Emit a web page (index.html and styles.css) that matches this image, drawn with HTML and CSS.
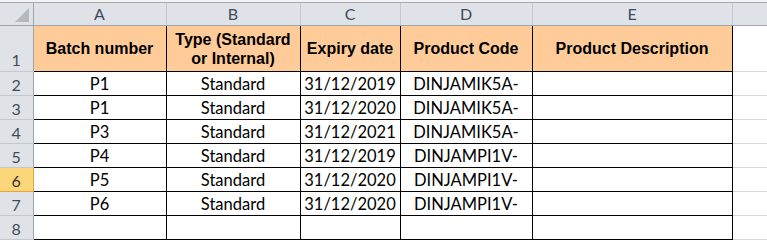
FILE: index.html
```html
<!DOCTYPE html>
<html>
<head>
<meta charset="utf-8">
<link rel="stylesheet" href="styles.css">
</head>
<body>
<div class="topbar"></div>
<table class="sheet">
  <colgroup>
    <col class="w-rh"><col class="w-a"><col class="w-b"><col class="w-c"><col class="w-d"><col class="w-e"><col class="w-f">
  </colgroup>
  <tr class="colhead">
    <th class="corner"><span class="tri"></span></th>
    <th>A</th><th>B</th><th>C</th><th>D</th><th>E</th><th class="last"></th>
  </tr>
  <tr class="r1">
    <th class="rh">1</th>
    <td class="hd">Batch number</td>
    <td class="hd">Type (Standard<br>or Internal)</td>
    <td class="hd">Expiry date</td>
    <td class="hd">Product Code</td>
    <td class="hd edge">Product Description</td>
    <td class="out top"></td>
  </tr>
  <tr class="row"><th class="rh">2</th><td>P1</td><td>Standard</td><td>31/12/2019</td><td>DINJAMIK5A-</td><td class="edge"></td><td class="out"></td></tr>
  <tr class="row"><th class="rh">3</th><td>P1</td><td>Standard</td><td>31/12/2020</td><td>DINJAMIK5A-</td><td class="edge"></td><td class="out"></td></tr>
  <tr class="row"><th class="rh">4</th><td>P3</td><td>Standard</td><td>31/12/2021</td><td>DINJAMIK5A-</td><td class="edge"></td><td class="out"></td></tr>
  <tr class="row"><th class="rh">5</th><td>P4</td><td>Standard</td><td>31/12/2019</td><td>DINJAMPI1V-</td><td class="edge"></td><td class="out"></td></tr>
  <tr class="row"><th class="rh sel">6</th><td>P5</td><td>Standard</td><td>31/12/2020</td><td>DINJAMPI1V-</td><td class="edge"></td><td class="out"></td></tr>
  <tr class="row"><th class="rh">7</th><td>P6</td><td>Standard</td><td>31/12/2020</td><td>DINJAMPI1V-</td><td class="edge"></td><td class="out"></td></tr>
  <tr class="row"><th class="rh">8</th><td></td><td></td><td></td><td></td><td class="edge"></td><td class="out"></td></tr>
</table>
</body>
</html>
```
FILE: styles.css
```css
html, body {
  margin: 0;
  padding: 0;
  background: #ffffff;
  overflow: hidden;
}
.topbar {
  height: 2px;
  background: #f3f3f3;
  border-bottom: 1px solid #a7abb0;
}
.sheet {
  border-collapse: collapse;
  table-layout: fixed;
  width: 800px;
  font-family: Lato, "Open Sans", sans-serif;
  font-size: 16.5px;
  color: #000;
}
.w-rh { width: 33px; }
.w-a { width: 133px; }
.w-b { width: 134px; }
.w-c { width: 100px; }
.w-d { width: 132px; }
.w-e { width: 200px; }
.w-f { width: 68px; }

.sheet th, .sheet td {
  padding: 0;
  overflow: hidden;
  white-space: nowrap;
}
.colhead th {
  height: 22px;
  background: #dfe3e8;
  color: #3f4b5b;
  font-weight: normal;
  font-size: 16px;
  line-height: 20px;
  text-align: center;
  border-right: 1px solid #c3c8ce;
  border-bottom: 1px solid #9ea5ad;
  vertical-align: middle;
}
.colhead th.corner {
  position: relative;
  border-right: 1px solid #9ea5ad;
}
.tri {
  position: absolute;
  right: 4px;
  bottom: 3px;
  width: 0;
  height: 0;
  border-left: 14px solid transparent;
  border-bottom: 14px solid #b4b9c0;
}
.rh {
  background: #dfe3e8;
  color: #3f4b5b;
  font-weight: normal;
  font-size: 16px;
  text-align: center;
  vertical-align: bottom;
  border-right: 1px solid #9ea5ad;
  border-bottom: 1px solid #c3c8ce;
  line-height: 21px;
}
.rh.sel {
  background: #fbd77a;
  border-right-color: #e5a43e;
  border-bottom-color: #e5a43e;
  color: #333;
}
.r1 td, .r1 th { height: 45px; }
.r1 .rh { line-height: 22px; }
.hd {
  background: #ffcc99;
  font-family: "Liberation Sans", Arial, sans-serif;
  font-weight: bold;
  font-size: 16px;
  line-height: 19px;
  text-align: center;
  vertical-align: middle;
  border-right: 1px solid #000;
  border-bottom: 1px solid #000;
}
.row td, .row th { height: 23px; }
.row td {
  text-align: center;
  vertical-align: middle;
  border-right: 1px solid #000;
  border-bottom: 1px solid #000;
  line-height: 20px;
}
.sheet td.out {
  border-right: none;
  border-bottom: 1px solid #d8d8d8;
}
```
